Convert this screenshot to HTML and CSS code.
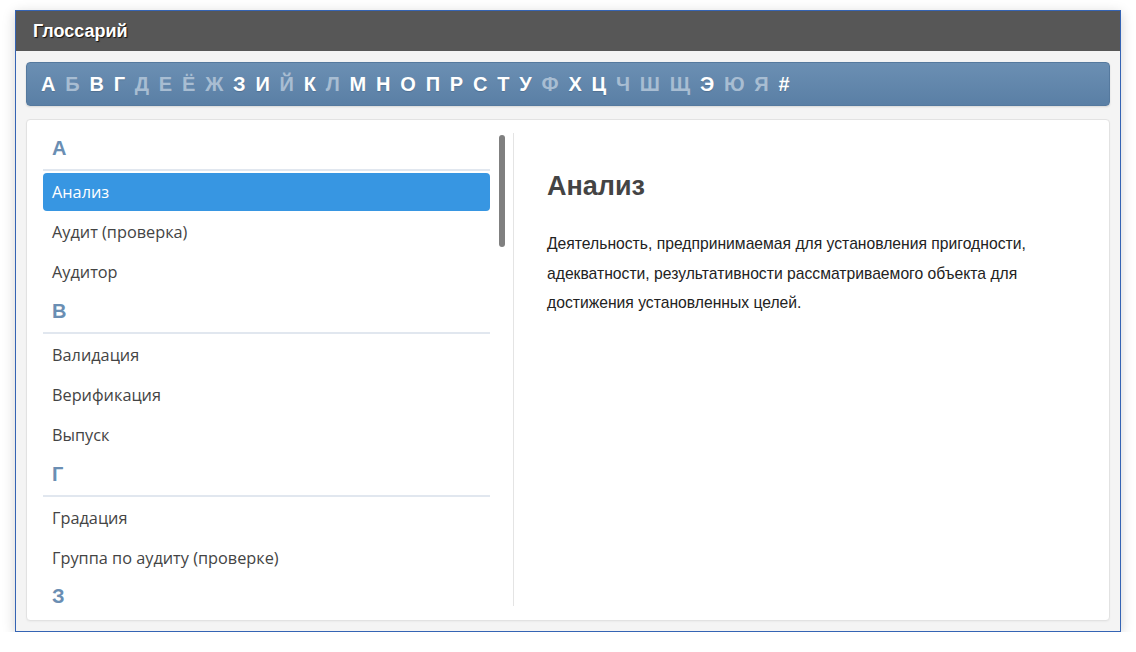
FILE: index.html
```html
<!DOCTYPE html>
<html lang="ru">
<head>
<meta charset="utf-8">
<title>Глоссарий</title>
<link rel="stylesheet" href="styles.css">
</head>
<body>
<div class="window">
  <div class="header">Глоссарий</div>
  <div class="body">
    <nav class="alpha">
      <span class="l">А</span><span class="l off">Б</span><span class="l">В</span><span class="l">Г</span><span class="l off">Д</span><span class="l off">Е</span><span class="l off">Ё</span><span class="l off">Ж</span><span class="l">З</span><span class="l">И</span><span class="l off">Й</span><span class="l">К</span><span class="l off">Л</span><span class="l">М</span><span class="l">Н</span><span class="l">О</span><span class="l">П</span><span class="l">Р</span><span class="l">С</span><span class="l">Т</span><span class="l">У</span><span class="l off">Ф</span><span class="l">Х</span><span class="l">Ц</span><span class="l off">Ч</span><span class="l off">Ш</span><span class="l off">Щ</span><span class="l">Э</span><span class="l off">Ю</span><span class="l off">Я</span><span class="l">#</span>
    </nav>
    <div class="panel">
      <div class="left">
        <div class="list">
          <div class="group">А</div>
          <div class="item active">Анализ</div>
          <div class="item">Аудит (проверка)</div>
          <div class="item">Аудитор</div>
          <div class="group">В</div>
          <div class="item">Валидация</div>
          <div class="item">Верификация</div>
          <div class="item">Выпуск</div>
          <div class="group">Г</div>
          <div class="item">Градация</div>
          <div class="item">Группа по аудиту (проверке)</div>
          <div class="group last">З</div>
        </div>
        <div class="thumb"></div>
      </div>
      <div class="right">
        <h1 class="term">Анализ</h1>
        <p class="def">Деятельность, предпринимаемая для установления пригодности, адекватности, результативности рассматриваемого объекта для достижения установленных целей.</p>
      </div>
    </div>
  </div>
</div>
</body>
</html>
```
FILE: styles.css
```css
html, body {
  margin: 0;
  padding: 0;
  background: #ffffff;
}
body {
  padding: 10px 15px 0 15px;
  font-family: "Liberation Sans", Arial, sans-serif;
}
.window {
  width: 1106px;
  height: 622px;
  box-sizing: border-box;
  border: 1px solid #3564b4;
  display: flex;
  flex-direction: column;
  box-shadow: 0 3px 12px rgba(0, 0, 0, 0.18);
  background: #f4f4f4;
}
.header {
  height: 40px;
  flex: none;
  background: #575757;
  color: #ffffff;
  font: bold 18px/40px "Liberation Sans", Arial, sans-serif;
  padding-left: 17px;
  text-shadow: 1px 1px 1px rgba(0, 0, 0, 0.8);
}
.body {
  flex: 1;
  min-height: 0;
  display: flex;
  flex-direction: column;
  gap: 13px;
  padding: 11px 10px 10px 10px;
  background: #f4f4f4;
}
.alpha {
  flex: none;
  height: 44px;
  box-sizing: border-box;
  border: 1px solid #55799e;
  border-radius: 4px;
  background: linear-gradient(#6b8fb3, #5a7fa5);
  box-shadow: 0 1px 2px rgba(0, 0, 0, 0.12);
  display: flex;
  align-items: center;
  gap: 9.8px;
  padding-left: 14px;
}
.l {
  color: #ffffff;
  font: bold 20px/1 "Liberation Sans", Arial, sans-serif;
  text-shadow: 0 1px 1px rgba(0, 0, 0, 0.15);
}
.l.off {
  color: #a8bdd2;
  text-shadow: none;
}
.panel {
  flex: 1;
  min-height: 0;
  background: #ffffff;
  border: 1px solid #e2e2e2;
  border-radius: 4px;
  display: flex;
  padding: 13px 0 14px 16px;
  box-shadow: 0 1px 2px rgba(0, 0, 0, 0.04);
}
.left {
  width: 470px;
  flex: none;
  position: relative;
  overflow: hidden;
}
.list {
  width: 447px;
  margin-top: -5px;
}
.group {
  height: 40px;
  padding: 0 0 1px 9px;
  border-bottom: 2px solid #e1e7ef;
  color: #6a8eb3;
  font: bold 20px/40px "Liberation Sans", Arial, sans-serif;
}
.group.last {
  border-bottom: none;
  height: 23px;
  line-height: 23px;
  padding: 8px 0 0 9px;
}
.item {
  margin-top: 2px;
  height: 38px;
  line-height: 38px;
  padding-left: 9px;
  border-radius: 4px;
  color: #444444;
  font-family: "Open Sans", "Noto Sans", sans-serif;
  font-size: 16.3px;
}
.item.active {
  background: #3796e2;
  color: #ffffff;
}
.thumb {
  position: absolute;
  left: 456px;
  top: 2px;
  width: 6px;
  height: 112px;
  border-radius: 3px;
  background: #808080;
}
.right {
  flex: 1;
  border-left: 1px solid #e4e4e4;
  padding-left: 33px;
  padding-right: 40px;
}
.term {
  margin: 37px 0 0 0;
  font: bold 27px/32px "Liberation Sans", Arial, sans-serif;
  color: #444444;
}
.def {
  margin: 27px 0 0 0;
  font: 15.7px/29.5px "Liberation Sans", Arial, sans-serif;
  color: #222222;
  max-width: 500px;
}
```
